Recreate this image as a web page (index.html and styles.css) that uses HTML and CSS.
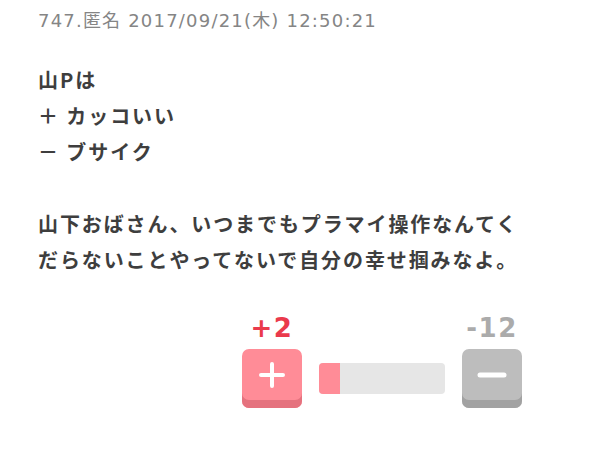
FILE: index.html
```html
<!DOCTYPE html>
<html lang="ja">
<head>
    <meta charset="UTF-8">
    <meta name="viewport" content="width=device-width, initial-scale=1.0">
    <title>747.匿名</title>
    <link rel="stylesheet" href="styles.css">
</head>
<body>
    <div class="comment">
        <div class="comment-head">747.匿名 2017/09/21(木) 12:50:21</div>

        <div class="comment-body">
            山Pは<br>
            ＋ カッコいい<br>
            － ブサイク<br>
            <br>
            山下おばさん、いつまでもプラマイ操作なんてく<br>
            だらないことやってないで自分の幸せ掴みなよ。
        </div>

        <div class="vote">
            <div class="vote-count plus">+2</div>
            <div class="vote-count minus">-12</div>

            <a href="#" class="vote-button plus" aria-label="プラス">
                <svg width="26" height="26" viewBox="0 0 26 26">
                    <path d="M13 2 V24 M2 13 H24" stroke="#fff" stroke-width="4" stroke-linecap="round" fill="none"/>
                </svg>
            </a>
            <div class="vote-bar">
                <div class="vote-bar-fill" style="width: 17%;"></div>
            </div>
            <a href="#" class="vote-button minus" aria-label="マイナス">
                <svg width="30" height="8" viewBox="0 0 30 8">
                    <path d="M3 4 H27" stroke="#fff" stroke-width="5" stroke-linecap="round" fill="none"/>
                </svg>
            </a>
        </div>
    </div>
</body>
</html>
```

FILE: styles.css
```css
body {
    margin: 0;
    padding: 0;
    background: #fff;
    font-family: "DejaVu Sans", "Noto Sans CJK JP", sans-serif;
}

.comment {
    padding: 9px 68px 0 38px;
}

.comment-head {
    font-size: 18px;
    line-height: 24px;
    letter-spacing: 1.2px;
    color: #858585;
    white-space: nowrap;
}

.comment-body {
    margin-top: 29px;
    font-family: "Noto Sans CJK JP", sans-serif;
    font-size: 20px;
    font-weight: bold;
    line-height: 36px;
    letter-spacing: 1.9px;
    color: #3e3e3e;
    white-space: nowrap;
}

.vote {
    margin-top: 35px;
    display: grid;
    grid-template-columns: 60px 126px 60px;
    grid-template-rows: 30px 59px;
    column-gap: 17px;
    row-gap: 6px;
    justify-content: end;
    align-items: center;
}

.vote-count {
    font-size: 26px;
    font-weight: bold;
    line-height: 30px;
    letter-spacing: 1.5px;
    text-align: center;
    grid-row: 1;
}

.vote-count.plus {
    color: #ea3a4c;
    grid-column: 1;
}

.vote-count.minus {
    color: #ababab;
    grid-column: 3;
}

.vote-button {
    grid-row: 2;
    height: 59px;
    padding-bottom: 8px;
    box-sizing: border-box;
    border-radius: 7px;
    display: flex;
    justify-content: center;
    align-items: center;
}

.vote-button.plus {
    grid-column: 1;
    background-color: #ff8c97;
    box-shadow: inset 0 -8px 0 #e5727e;
}

.vote-button.minus {
    grid-column: 3;
    background-color: #bdbdbd;
    box-shadow: inset 0 -8px 0 #a2a2a2;
}

.vote-bar {
    grid-row: 2;
    grid-column: 2;
    height: 31px;
    background-color: #e6e6e6;
    border-radius: 4px;
    overflow: hidden;
}

.vote-bar-fill {
    height: 100%;
    background-color: #ff8c97;
}
```
